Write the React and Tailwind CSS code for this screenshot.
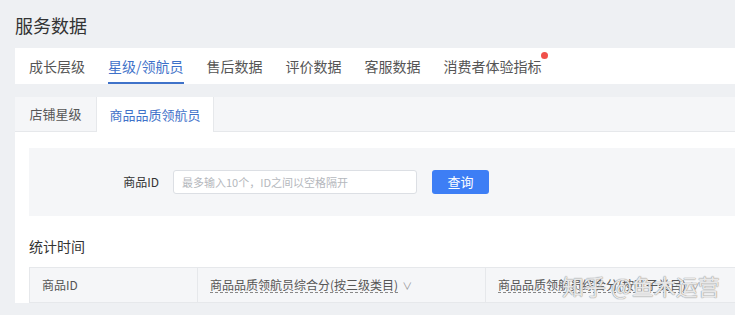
export default function App() {
  const tabs = ["成长层级", "星级/领航员", "售后数据", "评价数据", "客服数据", "消费者体验指标"];
  return (
    <div className="w-[735px] h-[315px] overflow-hidden bg-[#eef0f3] font-['Noto_Sans_CJK_SC',sans-serif] relative">
      <div className="pl-[15px]">
        <div className="h-[48px] flex items-center text-[18px] text-[#333] leading-none pt-[2px]">服务数据</div>
        <div className="h-[36px] bg-white flex items-stretch pl-[14px] gap-[23px] w-[760px]">
          {tabs.map((t, i) => (
            <div
              key={t}
              className={
                "relative flex items-center text-[14px] leading-none " +
                (i === 1 ? "text-[#3f72c9] border-b-2 border-[#3f72c9] pt-[2px]" : "text-[#555]")
              }
            >
              {t}
              {i === 5 && <span className="absolute right-[-6px] top-[4px] w-[7px] h-[7px] rounded-full bg-[#f0504a]" />}
            </div>
          ))}
        </div>
        <div className="mt-[13px] w-[760px] bg-white">
          <div className="h-[35px] bg-[#f5f6f8] border-b border-[#e6e8eb] flex text-[13px]">
            <div className="w-[81px] flex items-center justify-center text-[#555]">店铺星级</div>
            <div className="w-[118px] bg-white border-x border-[#e6e8eb] -mb-px flex items-center justify-center text-[#3f72c9]">商品品质领航员</div>
          </div>
          <div className="pl-[14px] pt-[16px]">
            <div className="h-[68px] bg-[#f5f6f8] flex items-center">
              <div className="w-[130px] text-right text-[12px] text-[#333]">商品ID</div>
              <div className="ml-[14px] w-[244px] h-[24px] bg-white border border-[#dcdfe4] rounded-[3px] flex items-center px-[8px] text-[11px] text-[#b5b8bd]">最多输入10个，ID之间以空格隔开</div>
              <div className="ml-[15px] w-[57px] h-[24px] rounded-[3px] bg-[#3d7ef5] text-white text-[13px] flex items-center justify-center">查询</div>
            </div>
            <div className="h-[51px] flex items-center text-[14px] text-[#333] pt-[10px]">统计时间</div>
            <div className="h-[36px] bg-[#f5f6f8] border border-[#e6e8eb] flex text-[12px] text-[#555]">
              <div className="w-[168px] flex items-center pl-[12px] border-r border-[#e6e8eb]">商品ID</div>
              <div className="w-[288px] flex items-center pl-[12px] border-r border-[#e6e8eb]">
                <span className="border-b border-dashed border-[#888] leading-[14px]">商品品质领航员综合分(按三级类目)</span>
                <span className="ml-[4px] text-[#999] text-[10px]">∨</span>
              </div>
              <div className="flex items-center pl-[12px] whitespace-nowrap">
                <span className="border-b border-dashed border-[#888] leading-[14px]">商品品质领航员综合分(按叶子类目)</span>
                <span className="ml-[4px] text-[#999] text-[10px]">∨</span>
              </div>
            </div>
          </div>
        </div>
      </div>
      <div className="absolute left-[562px] top-[274px] whitespace-nowrap text-[22px] leading-none text-white/80 [text-shadow:0_0_1px_#8a8a8a,0_0_1px_#8a8a8a]">知乎 @鱼木运营</div>
    </div>
  );
}
